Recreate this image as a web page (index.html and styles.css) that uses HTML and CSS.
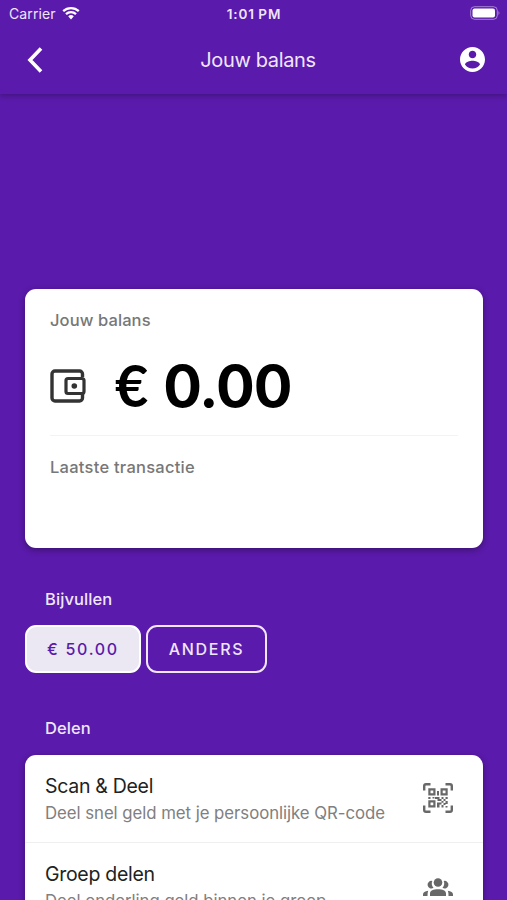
FILE: index.html
```
<!DOCTYPE html>
<html lang="nl">
<head>
    <meta charset="UTF-8">
    <meta name="viewport" content="width=device-width, initial-scale=1.0">
    <title>Jouw balans</title>
    <link rel="stylesheet" href="styles.css">
</head>
<body>

    <!-- Header -->
    <header class="header">
        <div class="status-bar">
            <div class="carrier">
                <span>Carrier</span>
                <svg class="wifi" viewBox="0 0 18 14">
                    <path d="M1.2 5.2a11.4 11.4 0 0 1 15.6 0M4 8.1a7.3 7.3 0 0 1 10 0" fill="none" stroke="currentColor" stroke-width="2.3"/>
                    <path d="M6.2 10.3a4 4 0 0 1 5.6 0L9 13.4z" fill="currentColor"/>
                </svg>
            </div>
            <div class="time">1:01 PM</div>
            <svg class="battery" viewBox="0 0 30 14">
                <rect x=".7" y=".7" width="26.6" height="12.6" rx="3.8" fill="none" stroke="currentColor" stroke-opacity=".45"/>
                <rect x="2.5" y="2.5" width="22.5" height="9" rx="2" fill="currentColor"/>
                <path d="M28.5 5a2.6 2.6 0 0 1 0 4z" fill="currentColor" opacity=".5"/>
            </svg>
        </div>
        <nav class="navbar">
            <svg class="back" viewBox="0 0 18 28"><path d="M16 2.500 5 14l11 11.500" fill="none" stroke="currentColor" stroke-width="3.6"/></svg>
            <h1 class="title">Jouw balans</h1>
            <svg class="account" viewBox="2 2 20 20"><path fill="currentColor" d="M12 2C6.48 2 2 6.48 2 12s4.48 10 10 10 10-4.48 10-10S17.52 2 12 2zm0 3c1.66 0 3 1.34 3 3s-1.34 3-3 3-3-1.34-3-3 1.34-3 3-3zm0 14.2c-2.5 0-4.71-1.28-6-3.22.03-1.99 4-3.08 6-3.08 1.99 0 5.97 1.09 6 3.08-1.29 1.94-3.5 3.22-6 3.22z"/></svg>
        </nav>
    </header>

    <main class="content">
        <!-- Balance -->
        <section class="card balance">
            <p class="label">Jouw balans</p>
            <div class="amount-row">
                <svg class="wallet" viewBox="0 0 36 34">
                    <path d="M32.5 8V5a3 3 0 0 0-3-3H5a3 3 0 0 0-3 3v24a3 3 0 0 0 3 3h24.5a3 3 0 0 0 3-3v-4" fill="none" stroke="currentColor" stroke-width="3.4"/>
                    <rect x="16" y="9.5" width="18" height="15" rx="2" fill="none" stroke="currentColor" stroke-width="3.2"/>
                    <circle cx="24.3" cy="17" r="2.8" fill="currentColor"/>
                </svg>
                <span class="amount"><span class="euro">€</span> 0.00</span>
            </div>
            <p class="label last">Laatste transactie</p>
        </section>

        <!-- Top up -->
        <h2 class="heading">Bijvullen</h2>
        <div class="buttons">
            <button class="btn btn-filled">€ 50.00</button>
            <button class="btn btn-outline">ANDERS</button>
        </div>

        <!-- Share -->
        <h2 class="heading share">Delen</h2>
        <section class="card list">
            <div class="item">
                <div>
                    <h3>Scan &amp; Deel</h3>
                    <p>Deel snel geld met je persoonlijke QR-code</p>
                </div>
                <svg class="icon" viewBox="0 0 30 30" fill="none" stroke="currentColor">
                    <path d="M1.2 7.5V3q0-1.8 1.8-1.8h4.5M22.5 1.2H27q1.8 0 1.8 1.8v4.5M28.8 22.5V27q0 1.8-1.8 1.8h-4.5M7.5 28.8H3q-1.8 0-1.8-1.8v-4.5" stroke-width="2.4"/>
                    <path d="M6.4 6.4h5v5h-5zM18.6 6.4h5v5h-5zM6.4 18.4h5v5h-5z" stroke-width="2.2"/>
                    <path d="M14 8h2v4.5h-2zM5.300 14h2.200v2H5.300zM9.500 14h2v1.500h-2zM12 14h4.500v4h-2v-2H12zM18.500 14h2v2h-2zM22.500 14h2.200v2h-2.200zM16.500 16h2v2h-2zM20.500 16h2v2h-2zM14 19.500h4.500v2h-2v3H14zM18.500 18h2v1.800h-2zM22.500 18h2.200v3h-2.200zM20.500 20h2v2h-2zM18.500 22h2v2.500h-2zM22.500 23h2v1.500h-2z" fill="currentColor" stroke="none"/>
                </svg>
            </div>
            <div class="item">
                <div>
                    <h3>Groep delen</h3>
                    <p>Deel onderling geld binnen je groep</p>
                </div>
                <svg class="icon group" viewBox="0 0 30 30" fill="currentColor">
                    <circle cx="15" cy="9.5" r="4.3"/>
                    <path d="M9.300 8a3.800 3.800 0 1 0 1.200 6.800A6.500 6.500 0 0 1 9.300 8zM20.700 8a3.800 3.800 0 1 1-1.200 6.800A6.500 6.500 0 0 0 20.700 8zM7 23V20.500c0-3 3.500-4.300 8-4.300s8 1.300 8 4.300V23zM0 23v-1.500c0-2 2-3.300 5.200-3.700Q4.500 19.500 4.500 23zM30 23v-1.500c0-2-2-3.300-5.200-3.700.7 1.700.7 3.200.7 5.200z"/>
                </svg>
            </div>
        </section>
    </main>

</body>
</html>
```
FILE: styles.css
```
* {
    box-sizing: border-box;
}

body {
    margin: 0;
    height: 900px;
    overflow: hidden;
    background-color: #5a1aab;
    color: #f0e6fa;
    font-family: Inter, "Liberation Sans", sans-serif;
}

h1, h2, h3, p {
    margin: 0;
    font-weight: 400;
}

svg {
    display: block;
    flex-shrink: 0;
}

/* Header */
.header {
    height: 94px;
    box-shadow: 0 2px 5px rgba(0, 0, 0, 0.25);
}

.status-bar {
    display: grid;
    grid-template-columns: 1fr auto 1fr;
    align-items: center;
    height: 27px;
    padding: 0 7px 0 9px;
    font-size: 14px;
}

.carrier {
    display: flex;
    align-items: center;
    gap: 6px;
    letter-spacing: 0.1px;
}

.wifi {
    width: 18px;
    height: 14px;
    margin-top: -2px;
    color: white;
}

.time {
    margin-right: 1px;
    font-weight: 600;
    font-size: 13.5px;
    letter-spacing: 0.9px;
    word-spacing: -1px;
}

.battery {
    width: 30px;
    height: 14px;
    margin-top: -1px;
    justify-self: end;
    color: white;
}

.navbar {
    display: grid;
    grid-template-columns: 1fr auto 1fr;
    align-items: center;
    height: 66px;
    padding: 0 22px 0 25px;
}

.back {
    width: 18px;
    height: 28px;
    color: white;
}

.title {
    padding-left: 6px;
    font-size: 20px;
    letter-spacing: -0.35px;
}

.account {
    width: 25px;
    height: 25px;
    margin-top: -1px;
    justify-self: end;
    color: white;
}

/* Cards */
.content {
    padding: 195px 24px 0 25px;
}

.card {
    background: white;
    border-radius: 11px;
    box-shadow: 0 2px 6px rgba(0, 0, 0, 0.35);
}

.balance {
    height: 259px;
    padding: 19px 25px 0;
}

.label {
    color: #777;
    font-size: 16.5px;
    font-weight: 500;
    letter-spacing: 0.1px;
    line-height: 24px;
}

.amount-row {
    display: flex;
    align-items: center;
    gap: 29px;
    height: 104px;
    padding-top: 5px;
    border-bottom: 1px solid #f3f3f3;
    color: black;
}

.wallet {
    width: 36px;
    height: 34px;
    color: #333;
}

.amount {
    margin-top: -2px;
    font-size: 57.5px;
    font-weight: 700;
    letter-spacing: -0.9px;
    line-height: 70px;
    word-spacing: 3px;
}

.euro {
    font-family: Lato, sans-serif;
}

.last {
    margin-top: 19px;
    letter-spacing: 0.25px;
}

/* Buttons */
.heading {
    margin: 39px 0 0 20px;
    font-size: 16.5px;
    font-weight: 500;
    letter-spacing: 0.1px;
    line-height: 24px;
}

.buttons {
    display: flex;
    gap: 5px;
    margin-top: 14px;
}

.btn {
    height: 48px;
    padding: 0;
    border: 2px solid #f1e6fb;
    border-radius: 11px;
    font-family: inherit;
    font-size: 16px;
    font-weight: 500;
    letter-spacing: 1.7px;
}

.btn-filled {
    width: 116px;
    border-color: white;
    background: #ece8f3;
    color: #5a1aab;
}

.btn-outline {
    width: 121px;
    background: transparent;
    color: #f0e6fa;
}

.share {
    margin-top: 43px;
}

/* List */
.list {
    margin-top: 15px;
}

.item {
    display: flex;
    justify-content: space-between;
    height: 88px;
    padding: 18px 30px 0 20px;
    border-bottom: 1px solid #efefef;
}

.item h3 {
    color: #222;
    font-size: 19.5px;
    letter-spacing: -0.3px;
    line-height: 27px;
}

.item p {
    color: #808080;
    font-size: 16.8px;
    letter-spacing: -0.05px;
    line-height: 26px;
}

.icon {
    width: 30px;
    height: 30px;
    margin-top: 10px;
    color: #686868;
}

.group {
    margin-top: 12px;
}
```
